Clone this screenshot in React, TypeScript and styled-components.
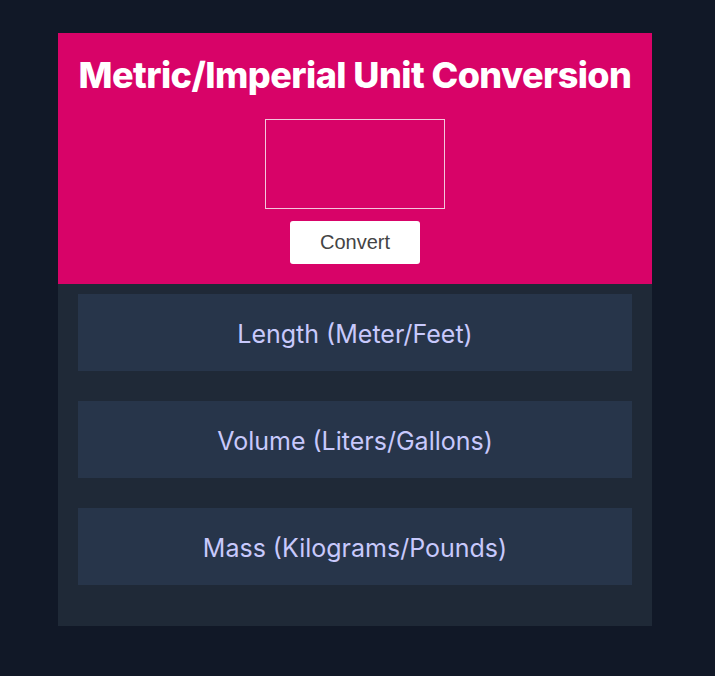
import React from "react";
import styled, { createGlobalStyle } from "styled-components";

const Global = createGlobalStyle`
  html, body { margin: 0; padding: 0; background: #111827; }
  body { font-family: Inter, "Noto Sans", sans-serif; }
`;

const Page = styled.div`
  min-height: 676px;
  padding: 33px 0 0 58px;
  box-sizing: border-box;
`;

const Card = styled.div`
  width: 594px;
  display: flex;
  flex-direction: column;
`;

const Header = styled.header`
  background: #d80368;
  height: 251px;
  box-sizing: border-box;
  padding-top: 20px;
  display: flex;
  flex-direction: column;
  align-items: center;
`;

const Title = styled.h1`
  margin: 0;
  font-family: Inter, sans-serif;
  font-weight: 800;
  font-size: 36px;
  line-height: 44px;
  color: #ffffff;
  letter-spacing: -0.55px;
  white-space: nowrap;
`;

const Input = styled.input`
  margin-top: 22px;
  width: 180px;
  height: 90px;
  box-sizing: border-box;
  background: transparent;
  border: 1px solid #f3c6dc;
  outline: none;
  color: #fff;
`;

const Button = styled.button`
  margin-top: 12px;
  width: 130px;
  height: 43px;
  border: none;
  border-radius: 3px;
  background: #ffffff;
  color: #444444;
  font-family: "Liberation Sans", Arial, sans-serif;
  font-size: 20px;
  cursor: pointer;
`;

const List = styled.section`
  background: #1f2937;
  padding: 10px 20px 41px;
  display: flex;
  flex-direction: column;
  gap: 30px;
`;

const Item = styled.div`
  height: 77px;
  background: #27354a;
  display: flex;
  align-items: center;
  justify-content: center;
  color: #c8c9fc;
  font-family: Inter, sans-serif;
  font-size: 25px;
  letter-spacing: 0;
  padding-top: 2px;
  box-sizing: border-box;
`;

const items = [
  "Length (Meter/Feet)",
  "Volume (Liters/Gallons)",
  "Mass (Kilograms/Pounds)",
];

export default function App() {
  return (
    <>
      <Global />
      <Page>
        <Card>
          <Header>
            <Title>Metric/Imperial Unit Conversion</Title>
            <Input type="text" />
            <Button>Convert</Button>
          </Header>
          <List>
            {items.map((t) => (
              <Item key={t}>{t}</Item>
            ))}
          </List>
        </Card>
      </Page>
    </>
  );
}
